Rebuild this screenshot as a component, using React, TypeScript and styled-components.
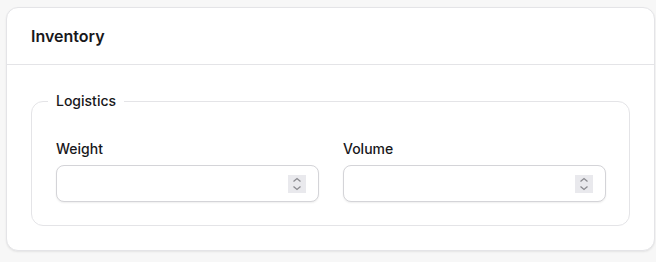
import React from "react";
import styled, { createGlobalStyle } from "styled-components";

const GlobalStyle = createGlobalStyle`
  html, body {
    margin: 0;
    padding: 0;
    background: #f7f7f7;
    font-family: Inter, "Noto Sans", sans-serif;
    color: #18181b;
  }
  * { box-sizing: border-box; }
`;

const Page = styled.div`
  padding: 7px 1px 12px 6px;
`;

const Card = styled.section`
  background: #ffffff;
  border: 1px solid #e4e4e7;
  border-radius: 12px;
  box-shadow: 0 1px 2px rgba(0, 0, 0, 0.08);
`;

const CardHeader = styled.header`
  height: 57px;
  display: flex;
  align-items: center;
  padding: 0 24px;
  border-bottom: 1px solid #e4e4e7;
`;

const Title = styled.h2`
  margin: 0;
  font-size: 16px;
  font-weight: 600;
  color: #18181b;
`;

const CardBody = styled.div`
  padding: 24px;
`;

const Fieldset = styled.fieldset`
  margin: 0;
  border: 1px solid #e4e4e7;
  border-radius: 12px;
  padding: 26px 23px 23px 24px;
  min-width: 0;
`;

const Legend = styled.legend`
  margin-left: -8px;
  padding: 0 8px;
  font-size: 14px;
  font-weight: 500;
  line-height: 24px;
  color: #18181b;
`;

const Grid = styled.div`
  display: grid;
  grid-template-columns: minmax(0, 1fr) minmax(0, 1fr);
  gap: 24px;
`;

const Field = styled.label`
  display: flex;
  flex-direction: column;
  gap: 6px;
  min-width: 0;
`;

const LabelText = styled.span`
  font-size: 14px;
  font-weight: 500;
  line-height: 20px;
  color: #18181b;
`;

const InputBox = styled.div`
  height: 37px;
  display: flex;
  align-items: center;
  gap: 8px;
  border: 1px solid #d4d4d8;
  border-radius: 8px;
  padding: 0 12px;
  background: #fff;
  box-shadow: 0 1px 2px rgba(0, 0, 0, 0.07);
`;

const NumberInput = styled.input`
  flex: 1;
  width: 100%;
  min-width: 0;
  border: none;
  outline: none;
  padding: 0;
  font-family: inherit;
  font-size: 14px;
  background: transparent;
  appearance: textfield;
  &::-webkit-inner-spin-button,
  &::-webkit-outer-spin-button {
    -webkit-appearance: none;
    margin: 0;
  }
`;

const Spinner = styled.span`
  width: 18px;
  height: 18px;
  flex: none;
  display: flex;
  align-items: center;
  justify-content: center;
  background: #e9e9ed;
`;

function SpinIcon() {
  return (
    <svg width="10" height="14" viewBox="0 0 10 14" fill="none">
      <path d="M1.5 4.5 L5 1.5 L8.5 4.5" stroke="#8a8a8f" strokeWidth="1.3" />
      <path d="M1.5 9.5 L5 12.5 L8.5 9.5" stroke="#8a8a8f" strokeWidth="1.3" />
    </svg>
  );
}

function NumberField({ label }: { label: string }) {
  return (
    <Field>
      <LabelText>{label}</LabelText>
      <InputBox>
        <NumberInput type="number" />
        <Spinner>
          <SpinIcon />
        </Spinner>
      </InputBox>
    </Field>
  );
}

export default function App() {
  return (
    <>
      <GlobalStyle />
      <Page>
        <Card>
          <CardHeader>
            <Title>Inventory</Title>
          </CardHeader>
          <CardBody>
            <Fieldset>
              <Legend>Logistics</Legend>
              <Grid>
                <NumberField label="Weight" />
                <NumberField label="Volume" />
              </Grid>
            </Fieldset>
          </CardBody>
        </Card>
      </Page>
    </>
  );
}
